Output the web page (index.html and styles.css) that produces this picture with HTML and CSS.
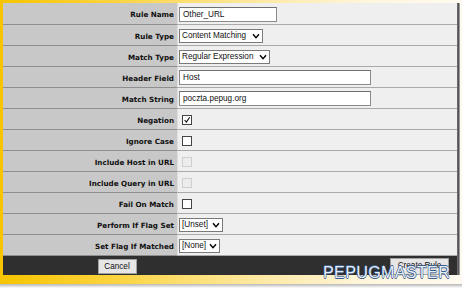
FILE: index.html
```html
<!DOCTYPE html>
<html>
<head>
<meta charset="utf-8">
<link rel="stylesheet" href="styles.css">
</head>
<body>
<div class="frame">
  <div class="panel">
    <div class="row"><div class="lbl">Rule Name</div><div class="val"><span class="txt w-name">Other_URL</span></div></div>
    <div class="row"><div class="lbl">Rule Type</div><div class="val"><span class="sel w-type">Content Matching<svg class="chev" viewBox="0 0 8 6"><path d="M1 1.2 L4 4.6 L7 1.2" fill="none" stroke="#000" stroke-width="1.4"/></svg></span></div></div>
    <div class="row"><div class="lbl">Match Type</div><div class="val"><span class="sel w-match">Regular Expression<svg class="chev" viewBox="0 0 8 6"><path d="M1 1.2 L4 4.6 L7 1.2" fill="none" stroke="#000" stroke-width="1.4"/></svg></span></div></div>
    <div class="row"><div class="lbl">Header Field</div><div class="val"><span class="txt w-long">Host</span></div></div>
    <div class="row"><div class="lbl">Match String</div><div class="val"><span class="txt w-long">poczta.pepug.org</span></div></div>
    <div class="row"><div class="lbl">Negation</div><div class="val"><span class="cb"><svg viewBox="0 0 10 10"><path d="M2 5 L4.2 7.6 L8.4 1.6" fill="none" stroke="#000" stroke-width="1.3"/></svg></span></div></div>
    <div class="row"><div class="lbl">Ignore Case</div><div class="val"><span class="cb"></span></div></div>
    <div class="row"><div class="lbl">Include Host in URL</div><div class="val"><span class="cb dis"></span></div></div>
    <div class="row"><div class="lbl">Include Query in URL</div><div class="val"><span class="cb dis"></span></div></div>
    <div class="row"><div class="lbl">Fail On Match</div><div class="val"><span class="cb"></span></div></div>
    <div class="row"><div class="lbl">Perform If Flag Set</div><div class="val"><span class="sel w-unset">[Unset]<svg class="chev" viewBox="0 0 8 6"><path d="M1 1.2 L4 4.6 L7 1.2" fill="none" stroke="#000" stroke-width="1.4"/></svg></span></div></div>
    <div class="row"><div class="lbl">Set Flag If Matched</div><div class="val"><span class="sel w-none">[None]<svg class="chev" viewBox="0 0 8 6"><path d="M1 1.2 L4 4.6 L7 1.2" fill="none" stroke="#000" stroke-width="1.4"/></svg></span></div></div>
    <div class="foot">
      <div class="half center"><span class="btn btn-cancel">Cancel</span></div>
      <div class="half right"><span class="btn btn-create">Create Rule</span></div>
    </div>
  </div>
  <div class="wm">PEPUGMASTER</div>
</div>
</body>
</html>
```

FILE: styles.css
```css
* { box-sizing: border-box; }
html, body { margin: 0; padding: 0; background: #ffffff; }
.frame {
  position: relative;
  width: 462px;
  height: 288px;
  overflow: hidden;
  padding: 3px 0 0 3px;
  background:
    linear-gradient(to bottom, rgba(0,0,0,0) 284px, #b9b9b9 284px, #d8d8d8 286px, #ffffff 288px),
    linear-gradient(to right, #f6c400 0%, #fcd440 25%, #fde8a0 55%, #fff6de 80%, #fffaf0 100%);
}
.panel {
  width: 454px;
  display: flex;
  flex-direction: column;
  box-shadow: 1px 0 0 #6a6a6a, 2px 0 0 #555, 3px 0 0 #9a9a9a;
  font-family: "Liberation Sans", Arial, sans-serif;
}
.row {
  display: flex;
  height: 21px;
}
.row:first-child { height: 22px; }
.lbl {
  width: 175px;
  background: #c8c8c8;
  border-bottom: 1px solid #8e8e8e;
  border-right: 1px solid #dedede;
  font-family: "DejaVu Sans", Verdana, sans-serif;
  font-weight: bold;
  font-size: 7.2px;
  color: #111;
  display: flex;
  align-items: center;
  justify-content: flex-end;
  padding-right: 3px;
  padding-top: 2px;
}
.val {
  flex: 1;
  background: #efefef;
  border-bottom: 1px solid #a9a9a9;
  display: flex;
  align-items: center;
  padding-left: 1px;
  padding-top: 1px;
  font-size: 8.2px;
  color: #111;
}
.txt {
  height: 15px;
  background: #fff;
  border: 1px solid #8a8a8a;
  border-top-color: #6f6f6f;
  display: flex;
  align-items: center;
  padding-left: 3px;
}
.w-name { width: 98px; }
.w-long { width: 192px; }
.sel {
  height: 14px;
  background: #fff;
  border: 1px solid #7a7a7a;
  display: flex;
  align-items: center;
  padding-left: 2px;
  justify-content: space-between;
  padding-right: 2px;
}
.chev { width: 8px; height: 6px; }
.w-type { width: 84px; }
.w-match { width: 91px; }
.w-unset { width: 44px; }
.w-none { width: 41px; }
.cb {
  width: 10px;
  height: 10px;
  margin-left: 3px;
  background: #fff;
  border: 1px solid #444;
  display: flex;
}
.cb svg { width: 8px; height: 8px; }
.cb.dis { background: #ececec; border-color: #cfcfcf; }
.foot {
  display: flex;
  height: 19px;
  background: #2f2f2f;
}
.half { width: 50%; display: flex; align-items: center; }
.center { justify-content: center; padding-left: 1px; }
.right { justify-content: flex-end; padding-right: 8px; align-items: flex-end; }
.btn {
  display: flex;
  align-items: center;
  justify-content: center;
  background: #e6e6e6;
  border: 1px solid #a0a0a0;
  font-size: 8.2px;
  color: #111;
}
.btn-cancel { width: 39px; height: 15px; margin-top: 1px; }
.btn-create { width: 59px; height: 17px; align-items: flex-start; padding-top: 2px; }
.wm {
  position: absolute;
  left: 323px;
  top: 264px;
  font-family: "Liberation Sans", Arial, sans-serif;
  font-size: 16px;
  letter-spacing: 0.4px;
  color: #e6eef8;
  text-shadow: -0.6px 0 0 #2a4a78, 0.6px 0 0 #4a6a98, 0 0.6px 0 #3a5a88, 0 -0.6px 0 #3a5a88;
}
```
